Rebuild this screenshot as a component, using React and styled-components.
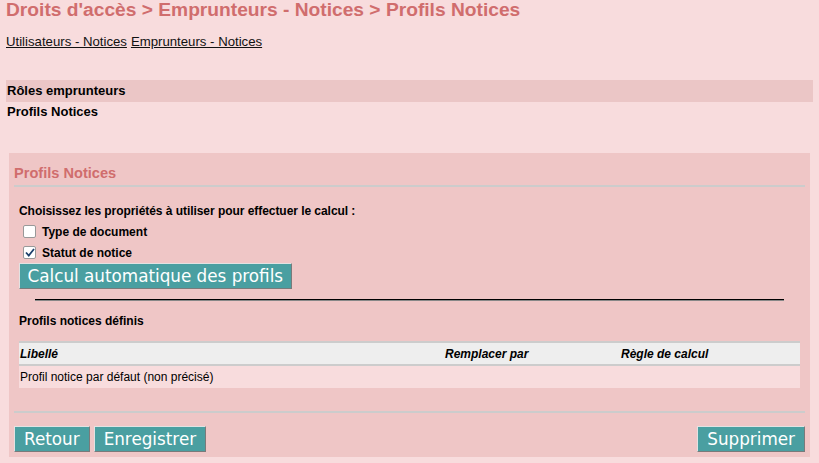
import React from "react";
import styled, { createGlobalStyle } from "styled-components";

const Global = createGlobalStyle`
  html, body {
    margin: 0;
    padding: 0;
    background: #f8dcdd;
    font-family: "Liberation Sans", Arial, sans-serif;
    font-size: 12px;
    color: #000;
  }
`;

const Page = styled.div`
  width: 819px;
  height: 463px;
  overflow: hidden;
`;

const Title = styled.h1`
  margin: 0;
  padding: 0 0 0 6px;
  font-size: 19.2px;
  line-height: 19px;
  font-weight: bold;
  color: #d06d6d;
`;

const Links = styled.div`
  margin: 15px 0 0 6px;
  display: flex;
  gap: 4px;
  font-size: 13.2px;
  line-height: 16px;
`;

const Link = styled.a`
  color: #111;
  text-decoration: underline;
  cursor: pointer;
`;

const Menu = styled.div`
  margin: 30px 0 0 6px;
  width: 807px;
`;

const MenuItem = styled.div`
  height: ${(p) => (p.$active ? "22px" : "20px")};
  line-height: ${(p) => (p.$active ? "22px" : "20px")};
  padding-left: 1px;
  font-size: 13px;
  font-weight: bold;
  background: ${(p) => (p.$active ? "#ebc6c6" : "transparent")};
`;

const Panel = styled.div`
  margin: 31px 0 0 9px;
  width: 791px;
  padding: 0 5px 5px 5px;
  background: #efc6c6;
`;

const PanelHead = styled.h3`
  margin: 0;
  padding: 12px 0 3px 0;
  font-size: 14.6px;
  line-height: 17px;
  color: #d06d6d;
  border-bottom: 2px solid #cccccc;
`;

const Body = styled.div`
  padding: 14px 5px 0 5px;
`;

const Label = styled.div`
  font-weight: bold;
  line-height: 20px;
  letter-spacing: -0.05px;
`;

const CheckRow = styled.label`
  display: flex;
  align-items: center;
  gap: 6px;
  height: 21px;
  padding-left: 4px;
  font-weight: bold;
`;

const Box = styled.span`
  width: 11px;
  height: 11px;
  border: 1px solid #999;
  border-radius: 2px;
  background: #fff;
  display: flex;
  align-items: center;
  justify-content: center;
`;

const Button = styled.button`
  font-family: "DejaVu Sans", sans-serif;
  font-size: 16.8px;
  color: #fff;
  background: #4a9fa1;
  border: 1px solid;
  border-color: #e2e2e2 #7a7a7a #7a7a7a #e2e2e2;
  padding: 0 ${(p) => p.$pad || "9px"};
  height: 26px;
  line-height: 24px;
  cursor: pointer;
`;

const Rule = styled.hr`
  margin: 10px 16px 0 16px;
  border: 0;
  border-top: 1px solid #000;
  border-bottom: 1px solid #888;
  height: 0;
`;

const Sub = styled.div`
  margin-top: 11px;
  font-weight: bold;
  line-height: 18px;
`;

const Table = styled.table`
  margin-top: 11px;
  width: 781px;
  border-collapse: collapse;
`;

const Th = styled.th`
  text-align: left;
  font-style: italic;
  font-weight: bold;
  background: #eeeeee;
  border-top: 2px solid #cccccc;
  border-bottom: 2px solid #cccccc;
  height: 21px;
  padding: 0 1px;
  width: ${(p) => p.$w || "auto"};
`;

const Td = styled.td`
  background: #f8dcdd;
  height: 22px;
  padding: 0 1px;
`;

const Footer = styled.div`
  margin-top: 23px;
  border-top: 2px solid #cccccc;
  padding-top: 13px;
  display: flex;
  gap: 4px;
`;

const Spacer = styled.div`
  flex: 1;
`;

function Check({ checked, children }) {
  return (
    <CheckRow>
      <Box>
        {checked && (
          <svg width="10" height="9" viewBox="0 0 10 9">
            <path d="M1 4.5 L3.8 7.5 L9 1" fill="none" stroke="#1b3f6b" strokeWidth="1.8" />
          </svg>
        )}
      </Box>
      {children}
    </CheckRow>
  );
}

export default function App() {
  return (
    <Page>
      <Global />
      <Title>Droits d'accès &gt; Emprunteurs - Notices &gt; Profils Notices</Title>
      <Links>
        <Link>Utilisateurs - Notices</Link>
        <Link>Emprunteurs - Notices</Link>
      </Links>
      <Menu>
        <MenuItem $active>Rôles emprunteurs</MenuItem>
        <MenuItem>Profils Notices</MenuItem>
      </Menu>
      <Panel>
        <PanelHead>Profils Notices</PanelHead>
        <Body>
          <Label>Choisissez les propriétés à utiliser pour effectuer le calcul :</Label>
          <Check>Type de document</Check>
          <Check checked>Statut de notice</Check>
          <Button $pad="7.5px">Calcul automatique des profils</Button>
          <Rule />
          <Sub>Profils notices définis</Sub>
          <Table>
            <thead>
              <tr>
                <Th $w="423px">Libellé</Th>
                <Th $w="174px">Remplacer par</Th>
                <Th>Règle de calcul</Th>
              </tr>
            </thead>
            <tbody>
              <tr>
                <Td>Profil notice par défaut (non précisé)</Td>
                <Td />
                <Td />
              </tr>
            </tbody>
          </Table>
        </Body>
        <Footer>
          <Button>Retour</Button>
          <Button>Enregistrer</Button>
          <Spacer />
          <Button>Supprimer</Button>
        </Footer>
      </Panel>
    </Page>
  );
}
